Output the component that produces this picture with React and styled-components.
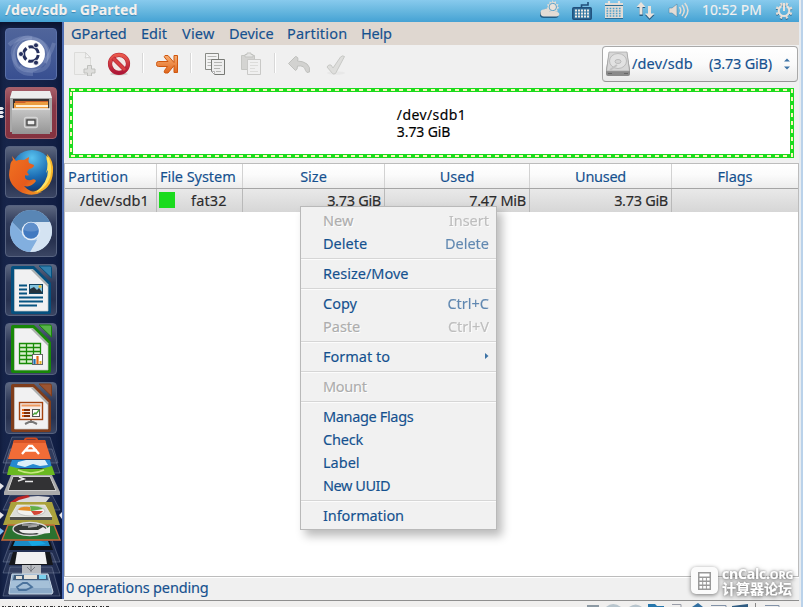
import React from 'react';
import styled, { createGlobalStyle } from 'styled-components';

const GlobalStyle = createGlobalStyle`
  * {
    box-sizing: border-box;
  }
  body {
    margin: 0;
    overflow: hidden;
    font-family: 'Noto Sans', 'Noto Sans CJK SC', sans-serif;
    font-size: 14.5px;
    line-height: 20px;
    color: #15518f;
    background: #bad2ea;
    -webkit-text-stroke: 0.15px;
  }
  svg {
    display: block;
    flex: none;
  }
`;

const Screen = styled.div`
  position: relative;
  width: 803px;
  height: 607px;
  overflow: hidden;
  display: flex;
  flex-direction: column;
`;

const Desktop = styled.div`
  width: 801px;
  height: 601px;
  display: flex;
  flex-direction: column;
  background: #f0f0f0;
  border-right: 2px solid #e6ebf0;
`;

const Panel = styled.header`
  height: 22px;
  flex: none;
  display: flex;
  align-items: center;
  padding: 0 6px 2px 5px;
  color: #f3f1ef;
  background: linear-gradient(#88caed, #67b7df 50%, #45a2d4);
`;

const PanelTitle = styled.div`
  flex: 1;
  font-size: 14px;
  font-weight: 700;
  letter-spacing: 0.15px;
  text-shadow: 0 1px 1px #3a86b4;
`;

const Indicators = styled.div`
  display: flex;
  align-items: center;
  svg {
    margin-right: 12px;
  }
  svg:last-child {
    margin-right: 0;
  }
`;

const Clock = styled.div`
  width: 61px;
  margin-right: 12px;
  font-size: 13.8px;
  white-space: nowrap;
`;

const Workspace = styled.div`
  flex: 1;
  min-height: 0;
  display: flex;
`;

const LauncherBar = styled.nav`
  width: 64px;
  height: 577px;
  flex: none;
  display: flex;
  flex-direction: column;
  gap: 7px;
  padding: 6px 5px 0;
  overflow: hidden;
  border-right: 2px solid #4f6fb4;
  background: linear-gradient(90deg, #17254a, #142146 70%, #0f1c42);
  box-shadow: inset 0 4px 5px #0b1430;
`;

const Tile = styled.div`
  position: relative;
  width: 52px;
  height: 52px;
  flex: none;
  border-radius: 4px;
  border: 1px solid ${(p) => p.$edge || '#56627f'};
  background: ${(p) => p.$bg || 'linear-gradient(#5c6780, #303b5a 35%, #27314f 70%, #3a4563)'};
  svg {
    margin: -1px;
  }
`;

const Pips = styled.div`
  position: absolute;
  left: -6px;
  top: 19px;
  display: flex;
  flex-direction: column;
  gap: 1px;
  i {
    width: 4px;
    height: 3px;
    background: #e8e8ee;
    clip-path: polygon(0 0, 60% 0, 100% 50%, 60% 100%, 0 100%);
  }
`;

const Stack = styled.div`
  margin: -7px -5px 0;
`;

const Window = styled.main`
  flex: 1;
  min-width: 0;
  display: flex;
  flex-direction: column;
`;

const MenuBar = styled.div`
  height: 23px;
  flex: none;
  display: flex;
  align-items: center;
  padding: 0 0 2px 7px;
  gap: 14px;
  background: #dfd7d0;
`;

const MenuTitle = styled.span`
  width: ${(p) => p.$w}px;
  white-space: nowrap;
  letter-spacing: ${(p) => p.$ls || 0}px;
`;

const Toolbar = styled.div`
  height: 43px;
  flex: none;
  display: flex;
  align-items: flex-start;
  padding: 7px 1px 0 9px;
`;

const ToolGroup = styled.div`
  display: flex;
  gap: ${(p) => p.$gap || 0}px;
  margin-right: ${(p) => p.$end || 11}px;
`;

const ToolDivider = styled.div`
  width: 2px;
  height: 20px;
  margin: 1px 11px 0 0;
  border-left: 1px solid #d8d8d8;
  border-right: 1px solid #fff;
`;

const DriveSelect = styled.div`
  width: 196px;
  height: 36px;
  margin: -6px 0 0 auto;
  display: flex;
  align-items: center;
  padding: 0 7px 0 3px;
  border: 1px solid #a9a9a9;
  border-bottom-color: #969696;
  border-radius: 4px;
  background: linear-gradient(#fff, #fafafa 50%, #e9e9e9);
`;

const DriveName = styled.span`
  width: 77px;
  margin-left: 2px;
  padding-bottom: 2px;
  letter-spacing: 0.15px;
`;

const DriveSize = styled.span`
  flex: 1;
  padding-bottom: 2px;
  white-space: nowrap;
  letter-spacing: -0.2px;
`;

const DiskMap = styled.div`
  display: grid;
  place-items: center;
  width: 725px;
  height: 70px;
  flex: none;
  margin: 0 0 5px 5px;
  background: #fff;
  svg,
  div {
    grid-area: 1 / 1;
  }
  div {
    color: #000;
  }
  p {
    margin: 0;
    height: 17px;
    line-height: 17px;
    font-size: 14px;
    letter-spacing: -0.1px;
  }
  p:first-child {
    letter-spacing: 0.4px;
  }
`;

const Table = styled.div`
  flex: 1;
  background: #fff;
  border: 1px solid #bcbcbc;
`;

const TableRow = styled.div`
  display: grid;
  grid-template-columns: 92px 86px 142px 145px 142px 1fr;
  height: ${(p) => (p.$head ? 25 : 23)}px;
  color: ${(p) => (p.$head ? '#15518f' : '#2b2b2b')};
  background: ${(p) => (p.$head ? 'linear-gradient(#fff, #fbfbfb 45%, #ececec)' : 'linear-gradient(#e9e9e9, #d6d6d6)')};
  border-bottom: ${(p) => (p.$head ? '1px solid #a5a5a5' : '0')};
`;

const Cell = styled.div`
  display: flex;
  align-items: center;
  justify-content: ${(p) => p.$align || 'flex-start'};
  padding: 0 3px 1px ${(p) => p.$pl ?? 3}px;
  white-space: nowrap;
  letter-spacing: ${(p) => p.$ls || 0}px;
  border-right: 1px solid ${(p) => (p.$head ? '#d2d2d2' : '#b9b9b9')};
  &:last-child {
    border-right: 0;
  }
`;

const Swatch = styled.span`
  width: 16px;
  height: 16px;
  margin-right: 16px;
  background: #1adb1d;
`;

const StatusBar = styled.footer`
  height: 24px;
  flex: none;
  padding: 0 2px;
  line-height: 19px;
  letter-spacing: -0.16px;
  border-top: 1px solid #fff;
  border-bottom: 1px solid #8f8f8f;
`;

const HostBar = styled.div`
  width: 801px;
  height: 6px;
  background: #f0efee;
`;

const ContextMenu = styled.div`
  position: absolute;
  left: 300px;
  top: 206px;
  width: 197px;
  padding: 2px 0;
  border: 1px solid #b9b9b9;
  background: #f1f1f1;
  box-shadow: 5px 6px 9px rgba(0, 0, 0, 0.27);
`;

const MenuRow = styled.div`
  height: 23px;
  display: flex;
  align-items: center;
  justify-content: space-between;
  padding: 0 7px 2px 22px;
  letter-spacing: ${(p) => p.$ls || 0}px;
  color: ${(p) => (p.$disabled ? '#adadad' : '#15518f')};
  text-shadow: ${(p) => (p.$disabled ? '1px 1px 0 #fff' : 'none')};
`;

const Shortcut = styled.span`
  opacity: ${(p) => (p.$disabled ? 0.75 : 0.65)};
`;

const MenuLine = styled.div`
  height: 2px;
  margin: 3px 0 2px;
  border-top: 1px solid #d6d6d6;
  border-bottom: 1px solid #fcfcfc;
`;

const Watermark = styled.div`
  position: absolute;
  left: 691px;
  top: 567px;
  display: flex;
  gap: 4px;
  color: #fff;
  filter: drop-shadow(0 1px 2px rgba(0, 0, 0, 0.5));
`;

const WatermarkText = styled.div`
  font-weight: 700;
  white-space: nowrap;
  text-shadow: 0 0 2px #888;
  div {
    height: 14px;
    font-family: 'Open Sans', sans-serif;
    font-size: 14px;
    line-height: 14px;
    letter-spacing: -0.2px;
  }
  small {
    font-size: 11px;
  }
  p {
    margin: 0;
    font: 700 14px/15px 'Noto Sans CJK SC', sans-serif;
  }
`;

const menuItems = [
  { label: 'New', keys: 'Insert', disabled: true },
  { label: 'Delete', keys: 'Delete' },
  null,
  { label: 'Resize/Move' },
  null,
  { label: 'Copy', keys: 'Ctrl+C' },
  { label: 'Paste', keys: 'Ctrl+V', disabled: true },
  null,
  { label: 'Format to', submenu: true },
  null,
  { label: 'Mount', disabled: true, ls: -0.3 },
  null,
  { label: 'Manage Flags', ls: -0.35 },
  { label: 'Check', ls: -0.2 },
  { label: 'Label' },
  { label: 'New UUID', ls: -0.45 },
  null,
  { label: 'Information', ls: -0.1 },
];

function PanelIcons() {
  return (
    <Indicators>
      <svg width="20" height="20" viewBox="0 0 20 20">
        <g transform="translate(0 1)" fill="#245f86">
          <path d="M4 17a4 3.6 0 0 1-.5-7.200C5 6 9 8 10 11c5-1.500 8 0 8.500 3 0 2-1 3-3 3z" />
        </g>
        <path d="M12.500 0l1 2.300 2.500-1 0 2.600 2.600.3-1.200 2.200 2 1.500-2.300 1.200.6 2.500-2.700-.2-2.500 1.600-5-3-.5-2 1-1.500-1-2 2.400-.4.200-2.600 2.300 1z" fill="#e3dcd5" />
        <circle cx="12.800" cy="7" r="3.700" fill="#e9e2db" stroke="#4c9bc6" strokeWidth=".9" />
        <path d="M4 16.500a3.600 3.600 0 0 1-3.500-3.700C.5 10 2.500 9 4 9.500 6 7.500 9.500 9 10 12c3-1.500 5.500-1.500 8.300.5C20.500 14 19 16.500 16.500 16.500z" fill="#e3dcd5" />
      </svg>
      <svg width="20" height="20" viewBox="0 0 20 20">
        <path d="M9.500 7.500V5H16V2" fill="none" stroke="#204f7b" strokeWidth="1.600" />
        <rect x=".8" y="7.800" width="18.400" height="11.400" rx="1" fill="#3577a3" stroke="#204f7b" strokeWidth="1.500" />
        <path d="M3 10.500h14M3 13.500h14M3 16.500h14" stroke="#eee9e4" strokeWidth="2" strokeDasharray="2 1" />
      </svg>
      <svg width="20" height="20" viewBox="0 0 20 20">
        <path d="M1 3h18v15H1z" fill="#e3dcd5" />
        <path d="M1 18.500h18M1 5.500h18" stroke="#2c6d95" strokeWidth="1" />
        <path d="M2.500 8.500h15M2.500 11h15M2.500 13.500h15M2.500 16h15" stroke="#4e9fca" strokeWidth="1.500" strokeDasharray="1.700 1.400" />
        <path d="M5 1v3M15 1v3" stroke="#e9e2db" strokeWidth="2.200" />
      </svg>
      <svg width="20" height="20" viewBox="0 0 20 20">
        <path d="M5 2L.8 7H3.500v8h3.300V7h2.700zM13.500 19l-4.500-5h3V6.500h3V14h3.500z" fill="#285f86" transform="translate(0 1)" />
        <path d="M5 2L.5 7H3.500v7.500h3V7h3zM13.500 18.500L9 13.500h3V6h3v7.500h3.500z" fill="#e9e2db" />
      </svg>
      <svg width="22" height="20" viewBox="0 0 22 20">
        <path d="M1 8h3l5-4v13l-5-4H1z" fill="#e3dcd5" stroke="#3c7ca3" strokeWidth=".5" />
        <path d="M11.500 7q2.500 3.500 0 7M14 5q4.500 5.500 0 11M16.700 3q6.500 7.500 0 15" fill="none" stroke="#e3dcd5" strokeWidth="1.500" />
      </svg>
      <Clock>10:52 PM</Clock>
      <svg width="18" height="20" viewBox="0 0 18 20">
        <circle cx="9" cy="11.700" r="7" fill="none" stroke="#2a678e" strokeWidth="3" strokeDasharray="2.200 3.298" strokeDashoffset="-1.600" />
        <circle cx="9" cy="10.800" r="7" fill="none" stroke="#e3dcd5" strokeWidth="3" strokeDasharray="2.200 3.298" strokeDashoffset="-1.600" />
        <path d="M6.500 6a5.300 5.300 0 1 0 5 0" fill="none" stroke="#e9e2db" strokeWidth="2" />
        <path d="M9 3v8" stroke="#e9e2db" strokeWidth="2" />
      </svg>
    </Indicators>
  );
}

function OfficeIcon({ color, light, children }) {
  return (
    <svg width="52" height="52" viewBox="0 0 52 52">
      <path d="M8 2h21l17 17v29q0 2-2 2H8q-2 0-2-2V4q0-2 2-2z" fill={color} />
      <path d="M9.500 5.500H28L43 20.500v26.500H9.500z" fill="#f1f1f2" stroke="#cacaca" strokeWidth=".7" />
      <path d="M28 5.500L43 20.500v2.500L26 6z" fill="#aaaead" />
      <path d="M34 2h11q1.500 0 1.500 1.500V14z" fill={light} stroke={color} strokeWidth="1" />
      {children}
    </svg>
  );
}

function FoldedStack() {
  return (
    <svg width="62" height="164" viewBox="0 434 62 164">
      <g fill="#ffffff" fillOpacity=".07" stroke="#b9c5e0" strokeOpacity=".35" strokeWidth=".8">
        <path d="M12 437h38l8 26H3z" />
        <path d="M10 449h42l8 24H3z" />
        <path d="M10 495h42l8 15H3z" />
        <path d="M11 540h41l8 22H3z" />
        <path d="M10 553h42l8 20H3z" />
        <path d="M10 567h42l8 29H3z" />
      </g>
      <path d="M25 442v-2q0-1.500 2-1.500h8q2 0 2 1.500v2" fill="none" stroke="#d44719" strokeWidth="2" />
      <path d="M14 440h31l6 19H8z" fill="#f16c37" />
      <path d="M14 440h31l1 3H13z" fill="#d65325" />
      <path d="M22 454l7-8h3l7 8M25 450.500h12" fill="none" stroke="#fff" strokeWidth="2.300" />
      <path d="M12 460h38l2 8H9z" fill="#2589d0" />
      <path d="M18 462l8-2h19l3 5-8 1-7-2-8 3-8-2z" fill="#dceff8" />
      <path d="M9 466l12 3h20l11-3 3 9H7z" fill="#69b820" />
      <path d="M18 470q13 6 26 0" fill="none" stroke="#c6e981" strokeWidth="1.500" />
      <path d="M11 475h41l8 17v3H4v-3z" fill="#aaa" />
      <path d="M13 476.500h37l6 14H8z" fill="#323234" stroke="#d0d0d0" strokeWidth="1" />
      <path d="M19 477l5 2-6 2M25 481.500h8" fill="none" stroke="#e8e8e8" strokeWidth="1.500" />
      <path d="M12 503l10-6 16-1 12 1-4 5 4 4H36l-13-3-8 3z" fill="#d9d9db" />
      <path d="M9 503l9-6 10-2 2 2-11 3-7 4z" fill="#bc2525" />
      <path d="M11 502h41l8 23H3z" fill="#aaa23d" />
      <path d="M17 505h28l7 12H10z" fill="#dcddd9" stroke="#f4f4ef" strokeWidth=".7" />
      <path d="M10 517h42v3H10z" fill="#50504c" />
      <ellipse cx="31" cy="511" rx="14" ry="5" fill="#f2f2ef" stroke="#aaa" strokeWidth=".6" />
      <path d="M31 511l-13-1q2-4 12-3z" fill="#e38b27" />
      <path d="M31 511l-1-5q10 0 13 3z" fill="#62ae47" />
      <path d="M31 511l12 0q-3 4-9 4z" fill="#d34636" />
      <path d="M8 525h46l6 15H2z" fill="#2b722f" stroke="#c66a38" strokeWidth="1.400" />
      <ellipse cx="30" cy="529" rx="17" ry="6.500" fill="#363a38" stroke="#ddd" strokeWidth="1.300" />
      <path d="M19 530q2 5 18 3l2 1 11-1V526l-4 3-3-2-5 3" fill="#ececec" />
      <path d="M22 525h17M28 527l9-1" stroke="#aaa" strokeWidth="1.500" />
      <path d="M13 541h37l3 9H9z" fill="#101217" />
      <path d="M15 541h33l2 5H13z" fill="#1a8ac5" />
      <path d="M28 541h13l5 3-14 2z" fill="#16a7e3" />
      <path d="M13 552h37l3 13H9z" fill="#15171b" />
      <path d="M17 552h28l2 12H15z" fill="#f1f1f1" />
      <path d="M22 565h19v9H22z" fill="#b9bcc1" />
      <path d="M31 565v7M27 567l4 4 4-4" fill="none" stroke="#777b83" />
      <path d="M12 574h36l5 18-1 2H9v-2z" fill="#8caac8" stroke="#cbdae7" strokeWidth="1" />
      <path d="M14 575h33l1 5H13z" fill="#405d7c" />
      <path d="M16 576h6v3h-6zM24 575h13v4H24z" fill="#e5e2db" />
      <path d="M39 575h7v4h-7z" fill="#7ad1ef" />
      <path d="M11 581h38l2 7H10z" fill="#a5c0d8" />
      <path d="M17 587l6-4h4l5 4-6 3h-7z" fill="none" stroke="#4b739d" strokeWidth="1.800" />
      <path d="M0 483l4 3-4 4zM0 512l4 3-4 4zM62 512l-3 3 3 4z" fill="#e6e6ea" />
      <path d="M0 528l4 3-4 4z" fill="#81bdf1" />
    </svg>
  );
}

function Launcher() {
  return (
    <LauncherBar>
      <Tile $edge="#5a70a8" $bg="linear-gradient(#50659b, #445a96 55%, #384f91)">
        <svg width="52" height="52" viewBox="0 0 52 52">
          <g fill="none" stroke="#b9c7e6" strokeOpacity=".22" strokeWidth="4">
            <path d="M4 17C17 4 42 9 44 27S28 46 15 38" />
            <path d="M49 15C40 44 20 49 11 35S14 7 27 10" />
            <path d="M28 46C3 47 5 16 22 12s23 12 18 23" />
          </g>
          <circle cx="26" cy="26" r="14" fill="#fff" />
          <circle cx="26" cy="26" r="7.300" fill="none" stroke="#252f5d" strokeWidth="3" strokeDasharray="13 2.290" strokeDashoffset="-1.100" />
          <g fill="#252f5d" stroke="#fff" strokeWidth=".8">
            <circle cx="16" cy="26" r="2.500" />
            <circle cx="31" cy="17.300" r="2.500" />
            <circle cx="31" cy="34.700" r="2.500" />
          </g>
        </svg>
      </Tile>
      <Tile $edge="#a4606a" $bg="linear-gradient(#a85f69, #863848 35%, #84323f)">
        <Pips><i /><i /><i /></Pips>
        <svg width="52" height="52" viewBox="0 0 52 52">
          <defs>
            <linearGradient id="drawer" x2="0" y2="1">
              <stop stopColor="#c5c5c5" />
              <stop offset="1" stopColor="#959595" />
            </linearGradient>
          </defs>
          <path d="M7 5h38l2 6v34H5V11z" fill="#a9a9a9" />
          <path d="M7 4h38l2 7H5z" fill="#ededed" />
          <path d="M8 12h36v10H8z" fill="#393432" />
          <path d="M10 14h33v8H10z" fill="#cd622a" />
          <path d="M9 16h11l1-1h22v7H9z" fill="#ec9d3f" />
          <path d="M11 18h32v2H11z" fill="#fff1d5" />
          <path d="M7 22h38v25H7z" fill="url(#drawer)" />
          <path d="M7 22h38" stroke="#eee" strokeWidth="1.500" />
          <rect x="19.500" y="30.500" width="13" height="10" rx="2" fill="#a6a6a6" stroke="#d6d6d6" strokeWidth="1.300" />
          <rect x="22" y="33" width="8" height="5" fill="#eee" stroke="#424242" strokeWidth="1.300" />
        </svg>
      </Tile>
      <Tile>
        <svg width="52" height="52" viewBox="0 0 52 52">
          <defs>
            <radialGradient id="globe" cx=".5" cy=".2" r=".8">
              <stop stopColor="#59c2ef" />
              <stop offset=".6" stopColor="#1c6db4" />
              <stop offset="1" stopColor="#103c78" />
            </radialGradient>
            <linearGradient id="fox" x2="1" y2="1">
              <stop stopColor="#f07321" />
              <stop offset=".6" stopColor="#e65a1c" />
              <stop offset="1" stopColor="#f3a228" />
            </linearGradient>
          </defs>
          <circle cx="27" cy="24" r="20" fill="url(#globe)" />
          <path d="M42 8q7 7 6 18-1 18-19 22l-8-1q20-2 24-18l-2 1q3-9-1-15l-1-3 2 2z" fill="#f8b429" />
          <path d="M44 12q5 14-1 24-4 7-12 10 12-10 12-22l-2 3q3-9 0-17z" fill="#ffe163" />
          <path d="M7 10l4 5q4-2 8-1l5-3q-1 4 0 6l5 2q0 3-5 4l-2 3 2 3q-2 1-4 0-1 6 6 5 4-2 5 1-5 7-12 5 7 8 18 6Q26 52 14 45 1 36 5 22q0-6 3-8z" fill="url(#fox)" />
        </svg>
      </Tile>
      <Tile>
        <svg width="52" height="52" viewBox="0 0 52 52">
          <circle cx="26" cy="26" r="21" fill="#abc9e8" />
          <path d="M7 17A21 21 0 0 1 45 17H26q-8 0-9 10z" fill="#5986b5" />
          <path d="M45 17A21 21 0 0 1 25 47l9-17q3-7-4-13z" fill="#d4e3f2" />
          <path d="M7 17A21 21 0 0 0 25 47l7-12q-11 2-15-7z" fill="#82afdf" />
          <circle cx="26" cy="26" r="9.300" fill="#e5eef8" />
          <circle cx="26" cy="26" r="7.800" fill="#4179c0" />
          <path d="M18.500 25a7.500 7.500 0 0 1 15 0q-7 3-15 0z" fill="#5f8fcb" />
        </svg>
      </Tile>
      <Tile>
        <OfficeIcon color="#05507f" light="#327fac">
          <path d="M14 21.500h8M14 25.500h8M14 29.500h8M14 33.500h24M14 37.500h24M14 41.500h18" stroke="#075481" strokeWidth="1.800" />
          <rect x="24.500" y="20.500" width="13" height="9" fill="#84c4df" stroke="#134360" />
          <path d="M25 29v-4l4-2 3 3 2-2 3 4v1z" fill="#26323b" />
          <circle cx="35" cy="22.500" r="1.500" fill="#e9b934" />
        </OfficeIcon>
      </Tile>
      <Tile>
        <OfficeIcon color="#178807" light="#58b34a">
          <path d="M14.500 20.500h21v20h-21zM14.500 24.500h21M14.500 28.500h21M14.500 32.500h21M14.500 36.500h21M21.500 20.500v20M28.500 20.500v20" fill="#d8efce" stroke="#178b07" strokeWidth="1.300" />
          <rect x="27.500" y="31.500" width="10" height="10" fill="#fff" stroke="#666" />
          <path d="M29.500 41v-5" stroke="#1c70b3" strokeWidth="2.200" />
          <path d="M32.500 41v-8" stroke="#e16817" strokeWidth="2.200" />
          <path d="M35.500 41v-3" stroke="#e5b222" strokeWidth="2" />
        </OfficeIcon>
      </Tile>
      <Tile>
        <OfficeIcon color="#803d1b" light="#9a5432">
          <path d="M26 38v3M20 42l6-3 6 3" fill="none" stroke="#777" strokeWidth="2" />
          <rect x="14.500" y="20.500" width="23" height="17" fill="#f6ece8" stroke="#a3420f" strokeWidth="1.400" />
          <path d="M16.500 23.500h19" stroke="#ee9a61" strokeWidth="2" />
          <path d="M17 28h8M17 31h8M17 34h8" stroke="#802e08" strokeWidth="1.800" />
          <path d="M17 28h2M17 31h2M17 34h2" stroke="#e86919" strokeWidth="1.800" />
          <rect x="27.500" y="27.500" width="7" height="7" fill="#fff" stroke="#555" />
          <path d="M28 33l2-2 1 1 3-4" fill="none" stroke="#49a43c" strokeWidth="1.400" />
        </OfficeIcon>
      </Tile>
      <Stack>
        <FoldedStack />
      </Stack>
    </LauncherBar>
  );
}

function Sheets() {
  return (
    <svg width="24" height="24" viewBox="0 0 24 24">
      <path d="M2.500 1.500h13v16h-13z" fill="#f3f3f3" stroke="#888a85" />
      <path d="M4.500 4.500h9M4.500 7.500h7M4.500 10.500h4M4.500 13.500h4" stroke="#b7b8b5" />
      <path d="M8.500 7.500h13v15h-10l-3-3z" fill="#eee" stroke="#777975" />
      <path d="M11 10.500h8M11 13.500h8M11 16.500h6M13 19.500h5" stroke="#b4b5b2" />
      <path d="M8.500 19.500h3v3z" fill="#fff" stroke="#999" strokeWidth=".7" />
    </svg>
  );
}

function Tools() {
  return (
    <>
      <ToolGroup $gap={10}>
        <svg width="24" height="24" viewBox="0 0 24 24">
          <path d="M1.500 .5h11l5 5v17h-16z" fill="#eeeeed" stroke="#dcdcda" />
          <path d="M12.500 .5q1 4-.5 5.500 3-1 5.500 0z" fill="#f8f8f8" stroke="#d3d3d1" />
          <path d="M14.500 13.500h4v3.500h3.500v4h-3.500v3h-4v-3H11v-4h3.500z" fill="#dededc" stroke="#bfc0bd" />
        </svg>
        <svg width="24" height="24" viewBox="0 0 24 24">
          <defs>
            <linearGradient id="stop" x2="0" y2="1">
              <stop stopColor="#ea5a4c" />
              <stop offset="1" stopColor="#ad1638" />
            </linearGradient>
          </defs>
          <ellipse cx="12" cy="22" rx="9" ry="1.500" fill="#ccc" />
          <circle cx="12" cy="11.800" r="9" fill="#f1e8e6" stroke="#b42334" strokeWidth="4.200" />
          <circle cx="12" cy="11.800" r="9" fill="none" stroke="url(#stop)" strokeWidth="3.200" />
          <path d="M6 6l12 12" stroke="#b42334" strokeWidth="4.200" />
          <path d="M6 6l12 12" stroke="#d84042" strokeWidth="3" />
        </svg>
      </ToolGroup>
      <ToolDivider />
      <ToolGroup>
        <svg width="24" height="24" viewBox="0 0 24 24">
          <defs>
            <linearGradient id="go" x2="0" y2="1">
              <stop stopColor="#f8ad70" />
              <stop offset="1" stopColor="#df661d" />
            </linearGradient>
          </defs>
          <path d="M3.500 9.500q-2 0-2 2v1q0 2 2 2h9l-3 4q-1 2 .5 2.500h3l6-7.500v7h3.500v-17H19v7l-6-7h-3q-1.500 1 0 2.500l3 3.500z" fill="url(#go)" stroke="#cf570f" strokeLinejoin="round" />
        </svg>
      </ToolGroup>
      <ToolDivider />
      <ToolGroup $gap={12} $end={11}>
        <Sheets />
        <svg width="24" height="24" viewBox="0 0 24 24">
          <path d="M2.500 3.500h13v14h-13z" fill="#d4d4d2" stroke="#c5c6c3" />
          <path d="M6 5V2.500h2V1h4v1.500h2V5z" fill="#e6e6e5" stroke="#c3c4c1" />
          <path d="M8.500 7.500h13v15h-13z" fill="#f0f0f0" stroke="#c9c9c7" />
          <path d="M11 10.500h8M11 13.500h8M11 16.500h5M11 19.500h8" stroke="#dcdcda" />
        </svg>
      </ToolGroup>
      <ToolDivider />
      <ToolGroup $gap={13}>
        <svg width="24" height="24" viewBox="0 0 24 24">
          <path d="M8.500 4.500l-7 7 7 7q2-.500 2-4.500 7-1 8 4.500l1.500 2 2.500-.5q1-5-2.500-8-4-3-9.500-3 1.500-4-2-4.500z" fill="#d2d2d0" stroke="#c0c1be" strokeLinejoin="round" />
        </svg>
        <svg width="24" height="24" viewBox="0 0 24 24">
          <ellipse cx="12" cy="21" rx="9" ry="1.700" fill="#e8e8e8" />
          <path d="M3 15q1.500-3 4-2l2 3 7.500-11q2-2 4-.5l-9 17q-2 1-3 0z" fill="#dededc" stroke="#c8c9c6" strokeLinejoin="round" />
        </svg>
      </ToolGroup>
    </>
  );
}

function PartitionTable() {
  return (
    <Table>
      <TableRow $head>
        <Cell $head $ls={0.2}>Partition</Cell>
        <Cell $head $ls={-0.05}>File System</Cell>
        <Cell $head $align="center">Size</Cell>
        <Cell $head $align="center">Used</Cell>
        <Cell $head $align="center" $ls={-0.3}>Unused</Cell>
        <Cell $head $align="center" $ls={-0.1}>Flags</Cell>
      </TableRow>
      <TableRow>
        <Cell $pl={15} $ls={0.1}>/dev/sdb1</Cell>
        <Cell $pl={2} $ls={0.15}><Swatch />fat32</Cell>
        <Cell $align="flex-end" $ls={-0.3}>3.73 GiB</Cell>
        <Cell $align="flex-end" $ls={-0.25}>7.47 MiB</Cell>
        <Cell $align="flex-end" $ls={-0.3}>3.73 GiB</Cell>
        <Cell />
      </TableRow>
    </Table>
  );
}

export default function App() {
  return (
    <Screen>
      <GlobalStyle />
      <Desktop>
        <Panel>
          <PanelTitle>/dev/sdb - GParted</PanelTitle>
          <PanelIcons />
        </Panel>
        <Workspace>
          <Launcher />
          <Window>
            <MenuBar>
              <MenuTitle $w={56}>GParted</MenuTitle>
              <MenuTitle $w={27}>Edit</MenuTitle>
              <MenuTitle $w={33} $ls={0.2}>View</MenuTitle>
              <MenuTitle $w={44}>Device</MenuTitle>
              <MenuTitle $w={60} $ls={0.2}>Partition</MenuTitle>
              <MenuTitle $w={31} $ls={-0.2}>Help</MenuTitle>
            </MenuBar>
            <Toolbar>
              <Tools />
              <DriveSelect>
                <svg width="24" height="26" viewBox="0 0 24 26">
                  <path d="M3 1h18l3 18v4q0 2-2 2H2q-2 0-2-2v-4z" fill="#8a8a8a" />
                  <path d="M3 1h18l2.500 19H.5z" fill="#d7d7d7" stroke="#a3a3a3" strokeWidth=".7" />
                  <ellipse cx="12" cy="10" rx="8.500" ry="7.500" fill="#e2e2e2" stroke="#bbb" />
                  <ellipse cx="12" cy="10.500" rx="3" ry="2" fill="#d6d6d6" stroke="#bbb" />
                  <path d="M4 19l7-5" stroke="#c2c2c2" strokeWidth="2" />
                  <path d="M2 22.500h4M18 22.500h4" stroke="#666" />
                </svg>
                <DriveName>/dev/sdb</DriveName>
                <DriveSize>(3.73 GiB)</DriveSize>
                <svg width="6" height="12" viewBox="0 0 6 12">
                  <path d="M0 3.500l3-3 3 3zM0 8.500l3 3 3-3z" fill="#3d73a6" />
                </svg>
              </DriveSelect>
            </Toolbar>
            <DiskMap>
              <svg width="725" height="70" viewBox="0 0 725 70">
                <rect x="2" y="2" width="721" height="66" fill="none" stroke="#1adb1d" strokeWidth="4" />
                <rect x="2" y="2" width="721" height="66" fill="none" stroke="#fbf7bc" strokeWidth="2" strokeDasharray="4 4" />
              </svg>
              <div>
                <p>/dev/sdb1</p>
                <p>3.73 GiB</p>
              </div>
            </DiskMap>
            <PartitionTable />
            <StatusBar>0 operations pending</StatusBar>
          </Window>
        </Workspace>
      </Desktop>
      <HostBar>
        <svg width="801" height="6" viewBox="0 0 801 6">
          <path d="M2 5.500h107" stroke="#333" strokeDasharray="2 1 1 2 3 1 1 3" />
          <path d="M587 4h12v2h-12z" fill="#8c99a3" />
          <path d="M606 6q7-6 15 0zM629 6q7-5 13 0z" fill="#b8c5cd" />
          <path d="M648 3h7l2 2h7v1h-16z" fill="#2576ac" />
          <path d="M672 3.500h9V6" fill="none" stroke="#999da8" />
          <path d="M692 6l6-4 5 4z" fill="#326fa0" />
          <path d="M711 4.500h15V6M765 4.500h14V6" fill="none" stroke="#8292a8" />
          <path d="M732 5l16-2v3h-16z" fill="#305c82" />
          <path d="M755.500 2v4" stroke="#888" />
        </svg>
      </HostBar>
      <ContextMenu>
        {menuItems.map((item, i) =>
          item ? (
            <MenuRow key={i} $disabled={item.disabled} $ls={item.ls}>
              <span>{item.label}</span>
              {item.keys && <Shortcut $disabled={item.disabled}>{item.keys}</Shortcut>}
              {item.submenu && (
                <svg width="4" height="6" viewBox="0 0 4 6">
                  <path d="M0 0l3.500 3L0 6z" fill="#3d73a6" />
                </svg>
              )}
            </MenuRow>
          ) : (
            <MenuLine key={i} />
          ),
        )}
      </ContextMenu>
      <Watermark>
        <svg width="27" height="28" viewBox="0 0 27 28">
          <rect width="27" height="27" rx="5" fill="#fbfbfb" />
          <path d="M7 5h13v18H7z" fill="#999" />
          <path d="M8.500 6.500h10v3h-10zM8.500 11h2.700v2.500H8.500zM12.200 11h2.700v2.500h-2.700zM15.900 11h2.700v2.500h-2.700zM8.500 15h2.700v2.500H8.500zM12.200 15h2.700v2.500h-2.700zM15.900 15h2.700v2.500h-2.700zM8.500 19h2.700v2.500H8.500zM12.200 19h2.700v2.500h-2.700zM15.900 19h2.700v2.500h-2.700z" fill="#fff" />
        </svg>
        <WatermarkText>
          <div>
            cnCalc.<small>ORG</small>
          </div>
          <p>计算器论坛</p>
        </WatermarkText>
      </Watermark>
    </Screen>
  );
}
